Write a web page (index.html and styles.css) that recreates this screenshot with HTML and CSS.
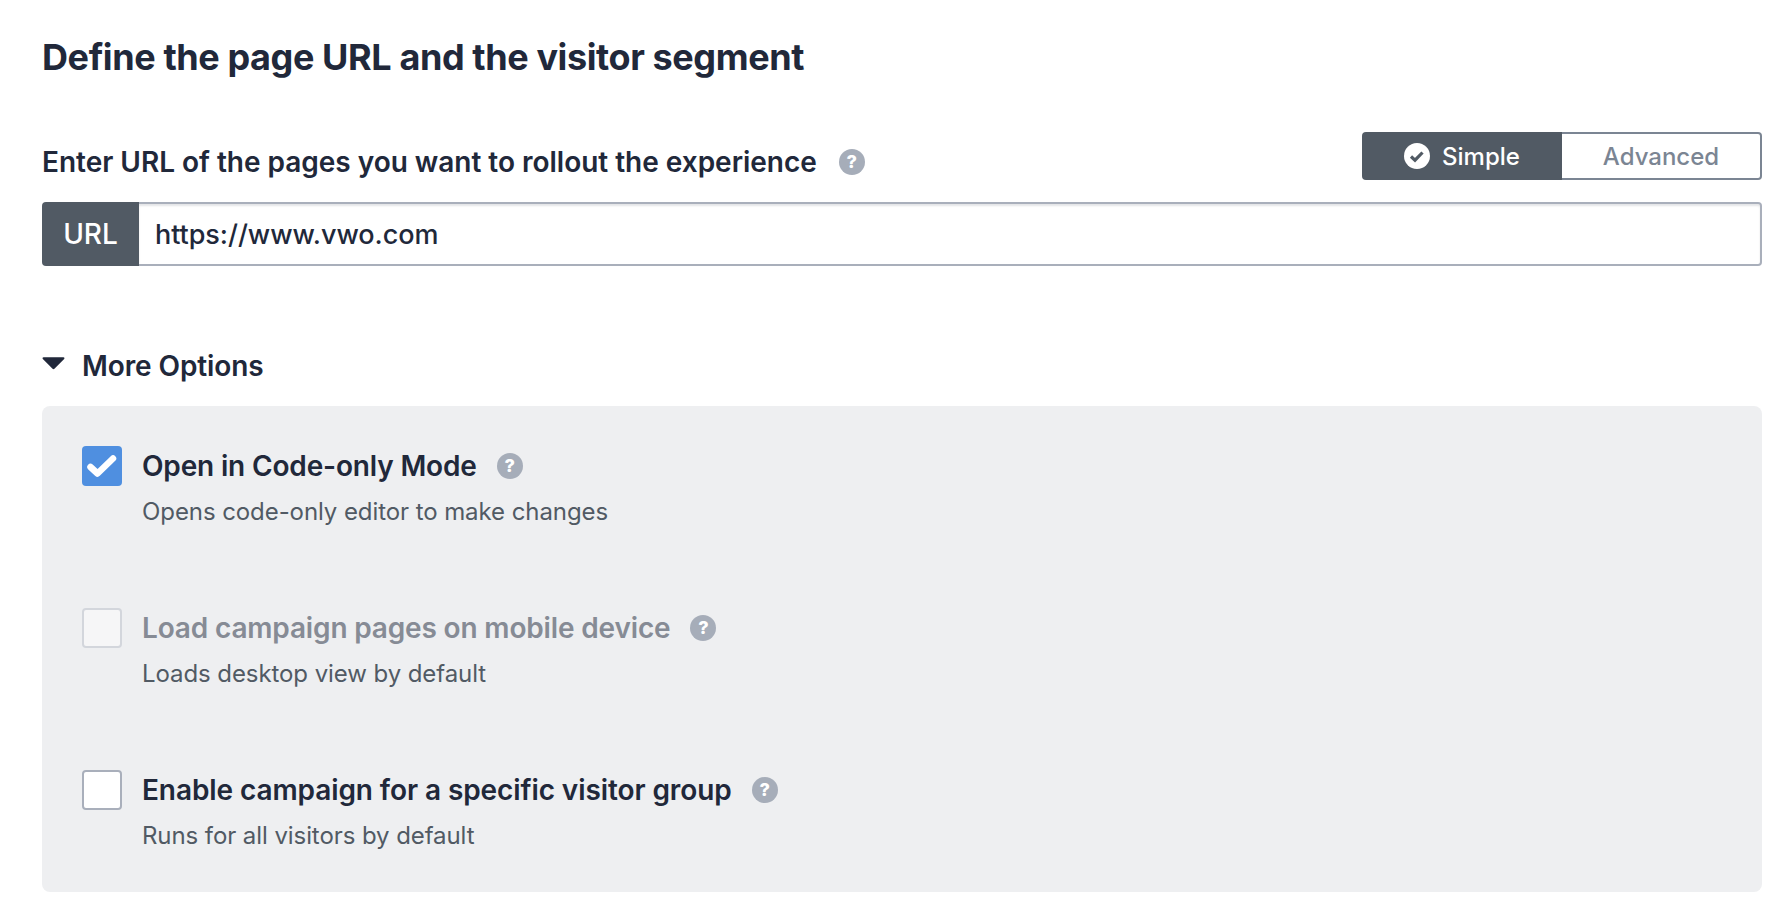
FILE: index.html
```html
<!DOCTYPE html>
<html lang="en">
<head>
<meta charset="utf-8">
<title>Define the page URL</title>
<link rel="stylesheet" href="styles.css">
</head>
<body>
<main class="page">
  <h1 class="title">Define the page URL and the visitor segment</h1>
  <div class="url-head">
    <div class="url-label"><span>Enter URL of the pages you want to rollout the experience</span><span class="help">?</span></div>
    <div class="toggle">
      <div class="toggle-btn active">
        <svg class="toggle-check" viewBox="0 0 26 26"><circle cx="13" cy="13" r="13" fill="#fff"/><path d="M7 13.500l4 3.700 7.500-7.700" fill="none" stroke="#515a64" stroke-width="3.200"/></svg>
        <span>Simple</span>
      </div>
      <div class="toggle-btn">Advanced</div>
    </div>
  </div>
  <div class="url-field">
    <div class="url-addon">URL</div>
    <div class="url-input">https://www.vwo.com</div>
  </div>
  <div class="more">
    <svg class="caret" viewBox="0 0 22 13"><path d="M1.500 1h19c.9 0 1.300 1 .7 1.600l-9.300 9.400c-.5.5-1.300.5-1.800 0L.8 2.600C.2 2 .6 1 1.500 1z" fill="#21283a"/></svg>
    <span>More Options</span>
  </div>
  <section class="panel">
    <div class="option">
      <div class="box checked"><svg viewBox="0 0 40 40"><path d="M8.500 21l7 6.500L31 12.500" fill="none" stroke="#fff" stroke-width="6.500" stroke-linecap="round" stroke-linejoin="round"/></svg></div>
      <div class="option-body">
        <div class="option-title"><span>Open in Code-only Mode</span><span class="help">?</span></div>
        <div class="option-desc">Opens code-only editor to make changes</div>
      </div>
    </div>
    <div class="option">
      <div class="box disabled"></div>
      <div class="option-body">
        <div class="option-title muted"><span>Load campaign pages on mobile device</span><span class="help">?</span></div>
        <div class="option-desc">Loads desktop view by default</div>
      </div>
    </div>
    <div class="option">
      <div class="box"></div>
      <div class="option-body">
        <div class="option-title wide"><span>Enable campaign for a specific visitor group</span><span class="help">?</span></div>
        <div class="option-desc">Runs for all visitors by default</div>
      </div>
    </div>
  </section>
</main>
</body>
</html>
```
FILE: styles.css
```css
* { box-sizing: border-box; }
html, body { margin: 0; background: #fff; }
body { font-family: Inter, "Liberation Sans", sans-serif; color: #21283a; }
.page { padding: 37px 24px 0 42px; }
.title { margin: 0; font-size: 36px; line-height: 40px; font-weight: 700; letter-spacing: -0.4px; }
.url-head { display: flex; justify-content: space-between; align-items: flex-start; margin-top: 55px; }
.url-label { display: flex; align-items: center; margin-top: 12px; font-size: 28px; line-height: 36px; font-weight: 600; letter-spacing: -0.02px; }
.url-label .help { margin-left: 22px; }
.help { width: 26px; height: 26px; margin-left: 20px; border-radius: 50%; background: #a6adb9; color: #fff; font-size: 18px; line-height: 26px; font-weight: 800; letter-spacing: 0; text-align: center; flex: none; }
.toggle { display: flex; width: 400px; height: 48px; font-size: 24px; font-weight: 500; color: #7b8593; }
.toggle-btn { flex: 0 0 200px; display: flex; align-items: center; justify-content: center; border: 2px solid #7b8593; border-left: 0; border-radius: 0 4px 4px 0; }
.toggle-btn.active { background: #515a64; border: 0; border-radius: 4px 0 0 4px; color: #fff; gap: 12px; }
.toggle-check { width: 26px; height: 26px; }
.url-field { display: flex; height: 64px; margin-top: 22px; }
.url-addon { width: 97px; background: #515a64; color: #fff; border-radius: 4px 0 0 4px; font-size: 28px; font-weight: 500; line-height: 64px; text-align: center; }
.url-input { flex: 1; border: 2px solid #a9afbb; border-left: 0; border-radius: 0 4px 4px 0; box-shadow: inset 0 2px 2px rgba(33,40,58,.12); padding-left: 16px; font-size: 27px; line-height: 62px; font-weight: 500; letter-spacing: -0.05px; }
.more { display: flex; align-items: center; gap: 17px; margin-top: 80px; height: 40px; font-size: 28px; font-weight: 600; letter-spacing: -0.1px; }
.caret { width: 23px; height: 14px; margin-top: -6px; flex: none; }
.panel { margin-top: 20px; height: 486px; padding: 40px; background: #eeeff1; border-radius: 8px; display: flex; flex-direction: column; gap: 82px; }
.option { display: flex; gap: 20px; }
.box { width: 40px; height: 40px; flex: none; border: 2px solid #a9afbb; border-radius: 4px; background: #fff; }
.box svg { display: block; width: 40px; height: 40px; }
.box.checked { border: 0; background: #4f8fe0; }
.box.disabled { border-color: #d3d6dc; background: #f6f6f7; }
.option-title { display: flex; align-items: center; font-size: 28px; line-height: 40px; font-weight: 600; letter-spacing: -0.16px; }
.option-title.muted { color: #868b95; }
.option-title.wide { letter-spacing: -0.09px; }
.option-desc { margin-top: 12px; font-size: 24px; line-height: 28px; color: #515a64; letter-spacing: -0.08px; }
```
